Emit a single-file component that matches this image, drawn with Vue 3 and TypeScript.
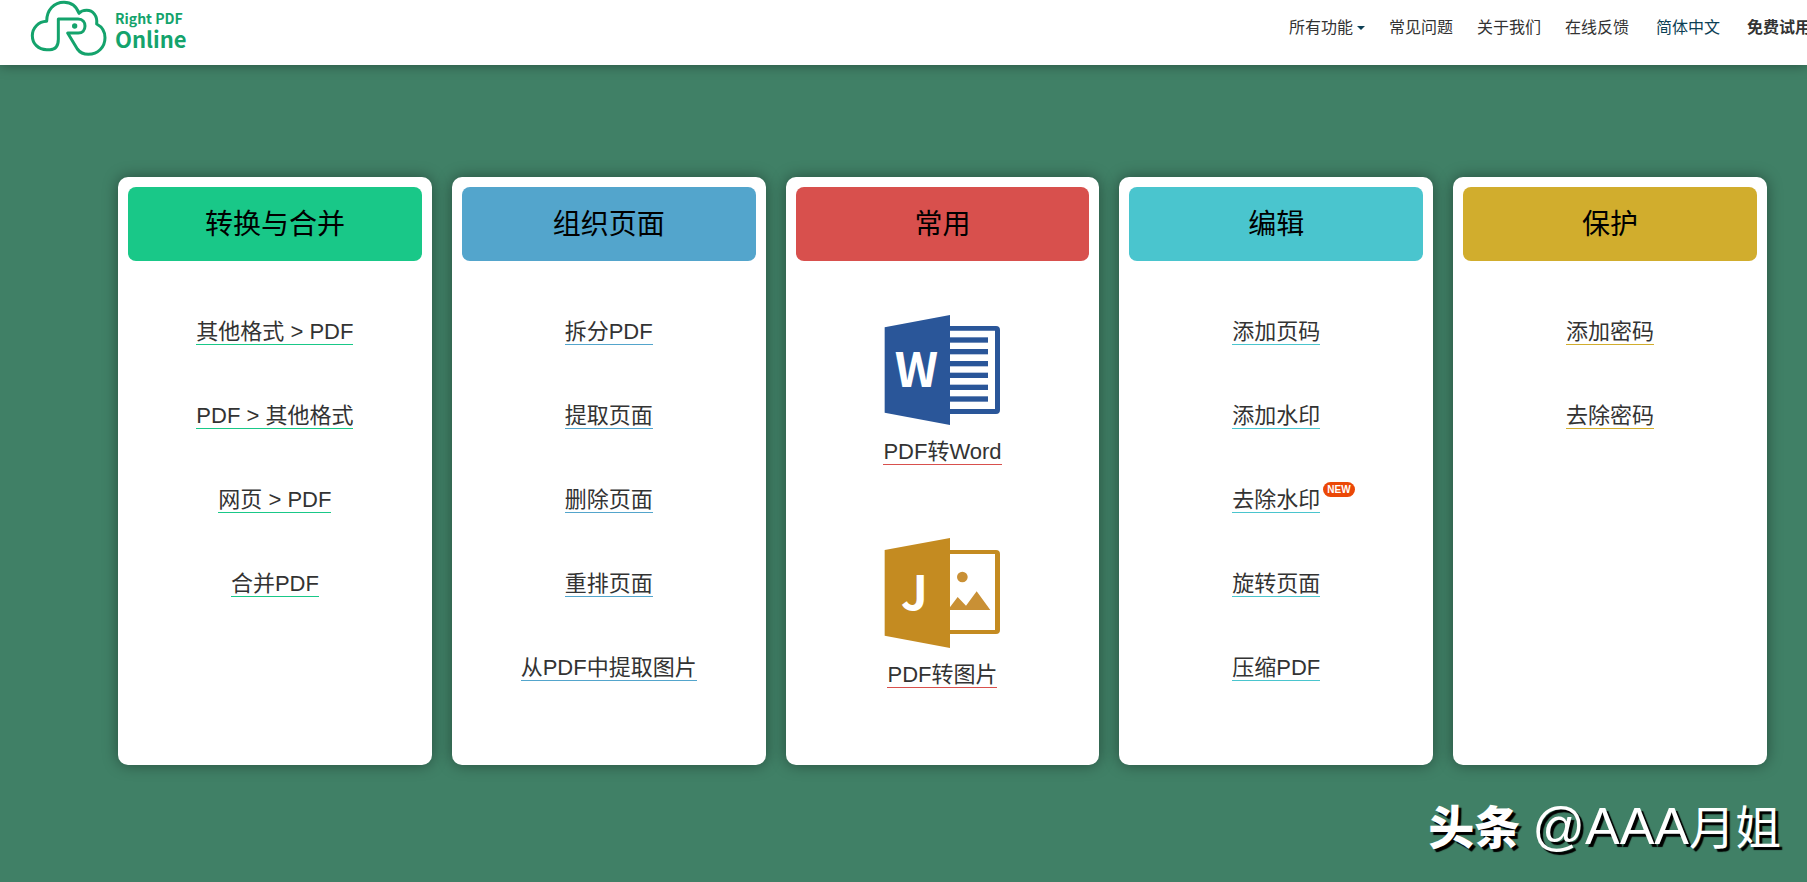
<script setup lang="ts">
interface Tool {
  label: string
  isNew?: boolean
  icon?: 'word' | 'image'
}

interface Group {
  title: string
  tone: string
  tools: Tool[]
}

const groups: Group[] = [
  {
    title: '转换与合并',
    tone: 'green',
    tools: [{ label: '其他格式 > PDF' }, { label: 'PDF > 其他格式' }, { label: '网页 > PDF' }, { label: '合并PDF' }],
  },
  {
    title: '组织页面',
    tone: 'blue',
    tools: [
      { label: '拆分PDF' },
      { label: '提取页面' },
      { label: '删除页面' },
      { label: '重排页面' },
      { label: '从PDF中提取图片' },
    ],
  },
  {
    title: '常用',
    tone: 'red',
    tools: [
      { label: 'PDF转Word', icon: 'word' },
      { label: 'PDF转图片', icon: 'image' },
    ],
  },
  {
    title: '编辑',
    tone: 'cyan',
    tools: [
      { label: '添加页码' },
      { label: '添加水印' },
      { label: '去除水印', isNew: true },
      { label: '旋转页面' },
      { label: '压缩PDF' },
    ],
  },
  {
    title: '保护',
    tone: 'gold',
    tools: [{ label: '添加密码' }, { label: '去除密码' }],
  },
]

const lineTops: number[] = [142, 177, 213, 248, 284, 319]
</script>

<template>
  <div class="page">
    <header class="header">
      <a class="logo" href="#">
        <svg class="logo-mark" viewBox="90 0 234 171" aria-hidden="true">
          <path
            d="M175 118V57H234C249 57 255 67 255 78C255 91 247 99 235 99H203L232 147C240 158 251 163 265 163C294 163 315 141 315 113C315 94 305 80 290 72C293 48 279 31 260 31C250 31 242 34 237 40C229 18 213 7 192 7C162 7 140 30 140 64C115 65 97 84 97 107C97 131 115 149 140 149H150C166 149 175 138 175 118Z"
          />
          <circle cx="224" cy="78" r="8" />
        </svg>
        <span class="logo-text">
          <span class="logo-small">Right PDF</span>
          <span class="logo-big">Online</span>
        </span>
      </a>
      <nav class="nav">
        <button class="nav-item nav-menu" type="button">所有功能<span class="caret"></span></button>
        <a class="nav-item" href="#">常见问题</a>
        <a class="nav-item" href="#">关于我们</a>
        <a class="nav-item" href="#">在线反馈</a>
        <a class="nav-item nav-lang" href="#">简体中文</a>
        <a class="nav-item nav-trial" href="#">免费试用</a>
      </nav>
    </header>

    <main class="board">
      <section v-for="group in groups" :key="group.title" class="card" :class="group.tone">
        <h2 class="card-title">{{ group.title }}</h2>
        <ul class="tools" :class="{ featured: group.tools[0].icon }">
          <li v-for="tool in group.tools" :key="tool.label">
            <a class="tool" href="#">
              <svg v-if="tool.icon === 'word'" class="tool-icon" viewBox="72 75 348 330" aria-hidden="true">
                <path
                  fill="#2a5699"
                  fill-rule="evenodd"
                  d="M268 108H408Q420 108 420 120V360Q420 372 408 372H268ZM268 122V357H405V122Z"
                />
                <rect v-for="top in lineTops" :key="top" x="268" :y="top" width="116" height="16" fill="#2a5699" />
                <path fill="#2a5699" d="M74 112L270 75V405L74 368Z" />
                <text x="169" y="290" class="icon-letter">W</text>
              </svg>
              <svg v-else-if="tool.icon === 'image'" class="tool-icon" viewBox="72 54 348 330" aria-hidden="true">
                <path
                  fill="#c48b21"
                  fill-rule="evenodd"
                  d="M268 90H408Q420 90 420 102V330Q420 342 408 342H268ZM268 102V330H405V102Z"
                />
                <circle cx="307" cy="171" r="16" fill="#c99035" />
                <path fill="#c99035" d="M268 264L293 231L318 257L350 214L391 270H268Z" />
                <path fill="#c48b21" d="M74 90L270 54V384L74 347Z" />
                <text x="163" y="270" class="icon-letter">J</text>
              </svg>
              <span class="tool-label">{{ tool.label }}<span v-if="tool.isNew" class="badge">NEW</span></span>
            </a>
          </li>
        </ul>
      </section>
    </main>

    <p class="signature"><b>头条</b><span class="handle">@AAA<span class="handle-name">月姐</span></span></p>
  </div>
</template>

<style>
body {
  margin: 0;
  background: #408066;
}
</style>

<style scoped>
.page {
  position: relative;
  box-sizing: border-box;
  min-height: 100vh;
  overflow: hidden;
  font-family: "Liberation Sans", "Noto Sans CJK SC", sans-serif;
  color: #333;
}

a {
  color: inherit;
  text-decoration: none;
}

.header {
  display: flex;
  justify-content: space-between;
  height: 65px;
  padding-left: 30px;
  background: #fff;
  box-shadow: 0 0 12px rgba(0, 0, 0, 0.4);
}

.logo {
  display: flex;
  gap: 7px;
  color: #14a36c;
}

.logo-mark {
  width: 78px;
  height: 57px;
}

.logo-mark path {
  fill: none;
  stroke: currentColor;
  stroke-width: 9;
  stroke-linejoin: round;
}

.logo-mark circle {
  fill: currentColor;
}

.logo-text {
  display: flex;
  flex-direction: column;
  padding-top: 8px;
  font-family: "Noto Sans CJK SC", sans-serif;
  font-weight: 700;
}

.logo-small {
  font-size: 14px;
  line-height: 20px;
}

.logo-big {
  font-size: 22px;
  line-height: 21px;
}

.nav {
  display: flex;
  gap: 24px;
  height: 56px;
  margin-right: -4px;
  align-items: center;
  font-size: 16px;
  line-height: 24px;
  white-space: nowrap;
}

.nav-item {
  flex: none;
}

.nav-menu {
  display: flex;
  align-items: center;
  gap: 4px;
  padding: 0;
  border: 0;
  background: none;
  font: inherit;
  color: inherit;
}

.caret {
  border: 4px solid transparent;
  border-top-color: #0c3f55;
  border-bottom: 0;
}

.nav-lang {
  margin: 0 3px;
  color: #0c3f55;
}

.nav-trial {
  font-weight: 700;
}

.board {
  display: grid;
  grid-template-columns: repeat(5, 1fr);
  gap: 20px;
  padding: 112px 40px 117px 118px;
}

.card {
  padding: 10px;
  border-radius: 10px;
  background: #fff;
  box-shadow: 0 0 15px rgba(0, 0, 0, 0.4);
}

.card-title {
  margin: 0;
  padding-top: 2px;
  border-radius: 8px;
  background: var(--tone);
  font-size: 28px;
  font-weight: 400;
  line-height: 72px;
  text-align: center;
  color: #000;
}

.green { --tone: #19c888; }
.blue { --tone: #53a5cc; }
.red { --tone: #d8504d; }
.cyan { --tone: #4ac5ce; }
.gold { --tone: #d1ad2d; }

.tools {
  display: flex;
  flex-direction: column;
  align-items: center;
  gap: 55px;
  margin: 0;
  padding: 55px 0 74px;
  list-style: none;
}

.featured {
  gap: 73px;
  padding: 54px 0 60px;
}

.tool {
  display: flex;
  flex-direction: column;
  align-items: center;
  gap: 11px;
}

.tool-icon {
  width: 116px;
  height: 110px;
}

.icon-letter {
  fill: #fff;
  font-family: "Noto Sans CJK SC", sans-serif;
  font-size: 142px;
  font-weight: 700;
  text-anchor: middle;
}

.tool-label {
  position: relative;
  padding-top: 4px;
  border-bottom: 1px solid var(--tone);
  font-size: 22px;
  line-height: 24px;
  white-space: nowrap;
}

.badge {
  position: absolute;
  top: -2px;
  left: calc(100% + 3px);
  padding: 0 4px;
  border-radius: 8px;
  background: #eb4807;
  font-size: 10px;
  font-weight: 700;
  line-height: 15px;
  color: #fff;
}

.signature {
  position: absolute;
  right: 26px;
  bottom: 24px;
  display: flex;
  align-items: baseline;
  gap: 12px;
  margin: 0;
  line-height: 60px;
  color: #fff;
  text-shadow: 3px 3px 1px #000;
}

.signature b {
  font-size: 46px;
  font-weight: 900;
}

.handle {
  font-size: 52px;
}

.handle-name {
  font-size: 46px;
}
</style>
